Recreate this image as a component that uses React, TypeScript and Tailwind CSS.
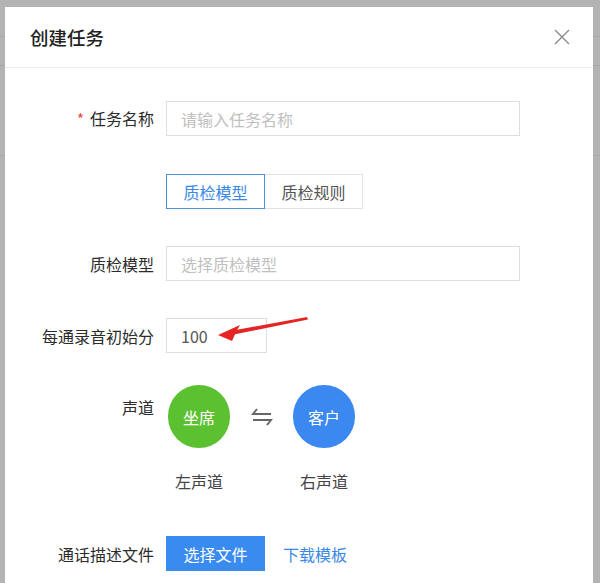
import React from "react";

const font = { fontFamily: '"Noto Sans CJK SC", "Noto Sans", sans-serif' };

export default function App() {
  return (
    <div
      className="relative w-[600px] h-[583px] overflow-hidden bg-[#b3b3b3]"
      style={font}
    >
      {/* faint page behind the overlay */}
      <div className="flex flex-col">
        <div className="h-[36px]" />
        <div className="h-[30px] border-t border-b border-[#a6a6a6]" />
        <div className="h-[30px]" />
        <div className="h-[60px] border-b border-[#a9a9a9]" />
      </div>

      {/* modal */}
      <div className="absolute left-[5px] top-[7px] w-[588px] h-[600px] bg-white">
        <div className="h-[61px] flex items-center justify-between pl-[25px] pr-[22px] border-b border-[#ebebeb]">
          <span className="text-[18.5px] font-medium text-[#222] leading-none">创建任务</span>
          <svg width="16" height="16" viewBox="0 0 16 16" className="mr-[1px]">
            <path d="M1 1 L15 15 M15 1 L1 15" stroke="#8a8a8a" strokeWidth="1.4" fill="none" />
          </svg>
        </div>

        <div className="flex flex-col pt-[33px] text-[16px]">
          {/* row 1 */}
          <div className="flex items-center h-[35px]">
            <div className="w-[161px] shrink-0 pr-[12px] text-right text-[#2b2b2b]">
              <span className="text-[#e8453c] mr-[6px] text-[15px]">*</span>
              任务名称
            </div>
            <div className="w-[354px] h-[35px] border border-[#dedede] flex items-center pl-[14px] text-[#c0c0c0]">
              请输入任务名称
            </div>
          </div>

          {/* tabs */}
          <div className="flex items-center h-[35px] mt-[38px] pl-[161px]">
            <div className="w-[99px] h-[35px] border border-[#4a90e2] flex items-center justify-center text-[#3a88e6]">
              质检模型
            </div>
            <div className="w-[98px] h-[35px] border border-l-0 border-[#e3e3e3] flex items-center justify-center text-[#555]">
              质检规则
            </div>
          </div>

          {/* row 3 */}
          <div className="flex items-center h-[35px] mt-[37px]">
            <div className="w-[161px] shrink-0 pr-[12px] text-right text-[#2b2b2b]">质检模型</div>
            <div className="w-[354px] h-[35px] border border-[#dedede] flex items-center pl-[14px] text-[#c0c0c0]">
              选择质检模型
            </div>
          </div>

          {/* row 4 */}
          <div className="flex items-center h-[35px] mt-[37px]">
            <div className="w-[161px] shrink-0 pr-[12px] text-right text-[#2b2b2b]">每通录音初始分</div>
            <div className="w-[101px] h-[35px] border border-[#dedede] flex items-center pl-[14px] text-[#555]">
              100
            </div>
          </div>

          {/* row 5 */}
          <div className="flex mt-[32px]">
            <div className="w-[161px] shrink-0 pr-[12px] pt-[10px] text-right text-[#2b2b2b] leading-[24px]">声道</div>
            <div className="flex items-start">
              <div className="flex flex-col items-center w-[66px]">
                <div className="w-[62px] h-[63px] rounded-full bg-[#5bc130] flex items-center justify-center text-white">
                  坐席
                </div>
                <div className="mt-[21px] text-[#444] leading-[24px]">左声道</div>
              </div>
              <div className="w-[59px] h-[63px] flex items-center justify-center">
                <svg width="22" height="20" viewBox="0 0 22 20">
                  <path d="M6 2 L2 7 L20 7" stroke="#666" strokeWidth="2" fill="none" strokeLinejoin="miter" />
                  <path d="M2 13 L20 13 L16 18" stroke="#666" strokeWidth="2" fill="none" strokeLinejoin="miter" />
                </svg>
              </div>
              <div className="flex flex-col items-center w-[66px]">
                <div className="w-[62px] h-[63px] rounded-full bg-[#3a88f0] flex items-center justify-center text-white">
                  客户
                </div>
                <div className="mt-[21px] text-[#444] leading-[24px]">右声道</div>
              </div>
            </div>
          </div>

          {/* row 6 */}
          <div className="flex items-center h-[35px] mt-[43px]">
            <div className="w-[161px] shrink-0 pr-[12px] text-right text-[#2b2b2b]">通话描述文件</div>
            <div className="w-[99px] h-[35px] bg-[#3a8bf0] flex items-center justify-center text-white">
              选择文件
            </div>
            <div className="ml-[18px] text-[#3a88e6]">下载模板</div>
          </div>
        </div>
      </div>

      {/* annotation arrow */}
      <svg className="absolute left-0 top-0" width="600" height="583" viewBox="0 0 600 583">
        <path d="M307 317 L308 319.5 L234 334.5 L233 330.5 Z" fill="#e52525" />
        <path d="M218 335 L240 325 L236 332 L232 341 Z" fill="#e52525" />
      </svg>
    </div>
  );
}
